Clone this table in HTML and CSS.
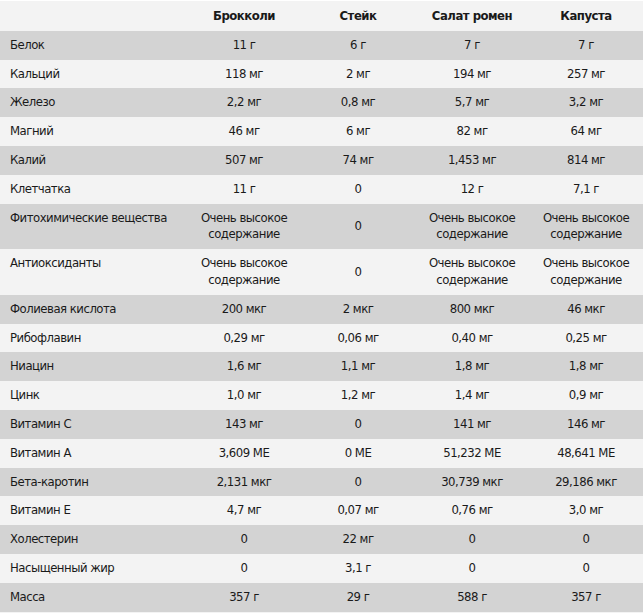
FILE: index.html
```html
<!DOCTYPE html>
<html lang="ru">
<head>
<meta charset="utf-8">
<title>Сравнение</title>
<link rel="stylesheet" href="styles.css">
</head>
<body>
<table class="nutri">
  <colgroup>
    <col class="c-label">
    <col class="c-val">
    <col class="c-val">
    <col class="c-val">
    <col class="c-val">
  </colgroup>
  <thead>
    <tr><th class="lbl"></th><th>Брокколи</th><th>Стейк</th><th>Салат ромен</th><th>Капуста</th></tr>
  </thead>
  <tbody>
    <tr><td class="lbl">Белок</td><td>11 г</td><td>6 г</td><td>7 г</td><td>7 г</td></tr>
    <tr><td class="lbl">Кальций</td><td>118 мг</td><td>2 мг</td><td>194 мг</td><td>257 мг</td></tr>
    <tr><td class="lbl">Железо</td><td>2,2 мг</td><td>0,8 мг</td><td>5,7 мг</td><td>3,2 мг</td></tr>
    <tr><td class="lbl">Магний</td><td>46 мг</td><td>6 мг</td><td>82 мг</td><td>64 мг</td></tr>
    <tr><td class="lbl">Калий</td><td>507 мг</td><td>74 мг</td><td>1,453 мг</td><td>814 мг</td></tr>
    <tr><td class="lbl">Клетчатка</td><td>11 г</td><td>0</td><td>12 г</td><td>7,1 г</td></tr>
    <tr><td class="lbl">Фитохимические вещества</td><td>Очень высокое<br>содержание</td><td>0</td><td>Очень высокое<br>содержание</td><td>Очень высокое<br>содержание</td></tr>
    <tr><td class="lbl">Антиоксиданты</td><td>Очень высокое<br>содержание</td><td>0</td><td>Очень высокое<br>содержание</td><td>Очень высокое<br>содержание</td></tr>
    <tr><td class="lbl">Фолиевая кислота</td><td>200 мкг</td><td>2 мкг</td><td>800 мкг</td><td>46 мкг</td></tr>
    <tr><td class="lbl">Рибофлавин</td><td>0,29 мг</td><td>0,06 мг</td><td>0,40 мг</td><td>0,25 мг</td></tr>
    <tr><td class="lbl">Ниацин</td><td>1,6 мг</td><td>1,1 мг</td><td>1,8 мг</td><td>1,8 мг</td></tr>
    <tr><td class="lbl">Цинк</td><td>1,0 мг</td><td>1,2 мг</td><td>1,4 мг</td><td>0,9 мг</td></tr>
    <tr><td class="lbl">Витамин C</td><td>143 мг</td><td>0</td><td>141 мг</td><td>146 мг</td></tr>
    <tr><td class="lbl">Витамин A</td><td>3,609 МЕ</td><td>0 МЕ</td><td>51,232 МЕ</td><td>48,641 МЕ</td></tr>
    <tr><td class="lbl">Бета-каротин</td><td>2,131 мкг</td><td>0</td><td>30,739 мкг</td><td>29,186 мкг</td></tr>
    <tr><td class="lbl">Витамин E</td><td>4,7 мг</td><td>0,07 мг</td><td>0,76 мг</td><td>3,0 мг</td></tr>
    <tr><td class="lbl">Холестерин</td><td>0</td><td>22 мг</td><td>0</td><td>0</td></tr>
    <tr><td class="lbl">Насыщенный жир</td><td>0</td><td>3,1 г</td><td>0</td><td>0</td></tr>
    <tr><td class="lbl">Масса</td><td>357 г</td><td>29 г</td><td>588 г</td><td>357 г</td></tr>
  </tbody>
</table>
</body>
</html>
```
FILE: styles.css
```css
html, body {
  margin: 0;
  padding: 0;
  background: #f3f3f3;
}
body {
  font-family: "DejaVu Sans Condensed", "DejaVu Sans", sans-serif;
  font-stretch: condensed;
  font-size: 13px;
  letter-spacing: -0.5px;
  color: #1a1a1a;
}
.nutri {
  width: 643px;
  border-collapse: collapse;
  table-layout: fixed;
  border-top: 1px solid #ffffff;
}
.c-label { width: 187px; }
.c-val { width: 114px; }
.nutri th,
.nutri td {
  padding: 6px 4px;
  line-height: 16.8px;
  text-align: center;
  vertical-align: middle;
}
.nutri th {
  font-weight: bold;
  padding-top: 7px;
  padding-bottom: 6px;
}
.nutri .lbl {
  text-align: left;
  vertical-align: top;
  padding-left: 10px;
}
.nutri tbody tr:nth-child(odd) { background: #d3d3d3; }
.nutri tbody tr:nth-child(even) { background: #f3f3f3; }
```
